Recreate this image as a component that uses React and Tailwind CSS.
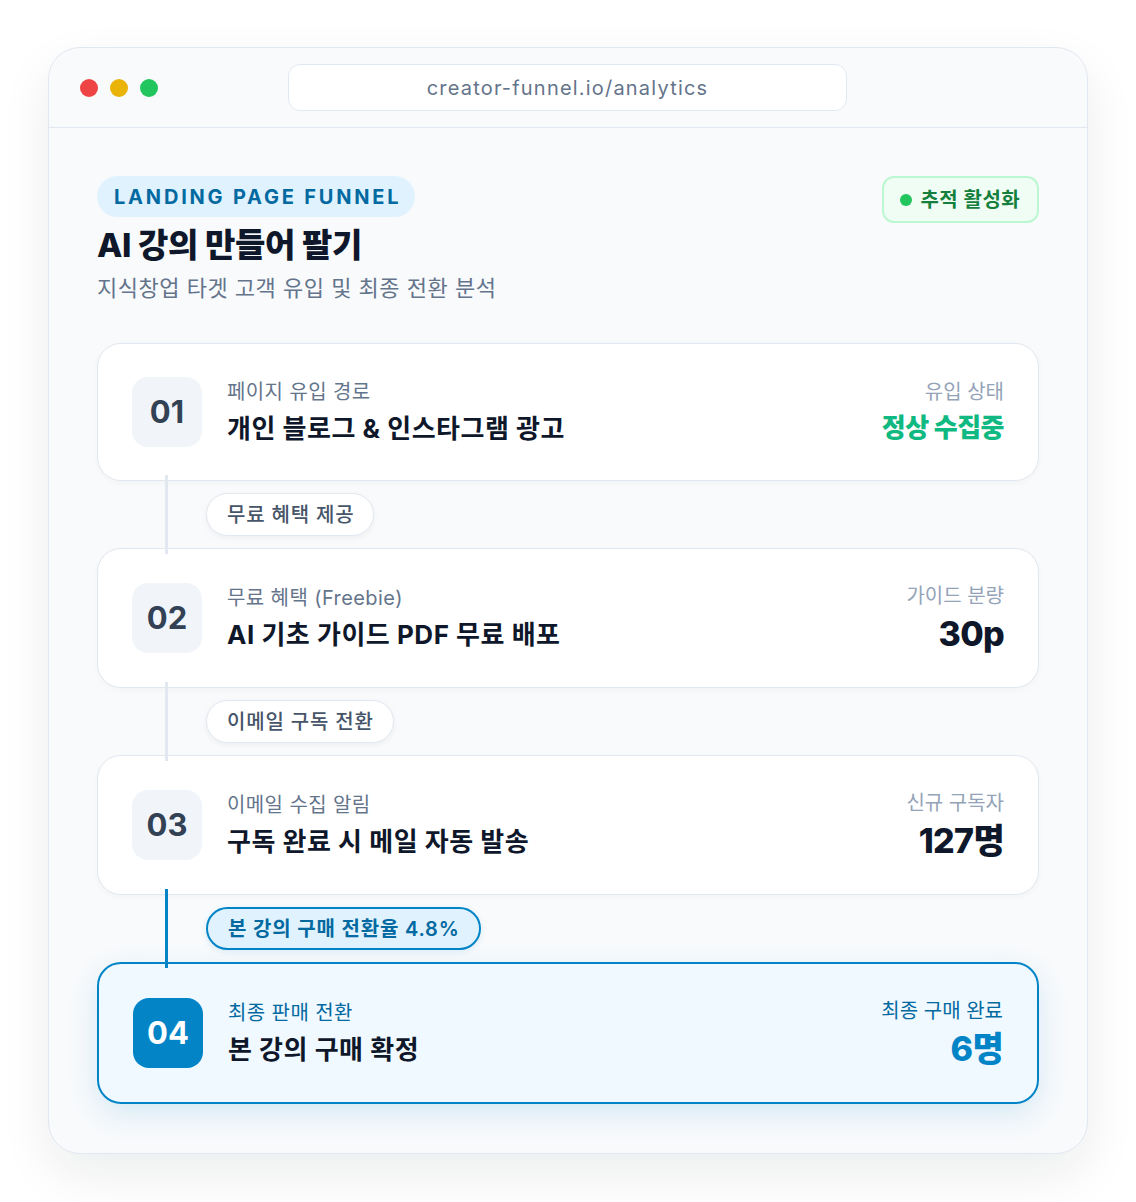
import React from 'react';

const FONT = { fontFamily: "Inter, 'Noto Sans CJK KR', sans-serif" };

function StepCard({ num, label, title, rightLabel, rightValue, valueClass, active }) {
  return (
    <div
      className={`relative flex items-center rounded-3xl px-[34px] py-[33px] ${
        active
          ? 'bg-[#f0f9ff] border-2 border-[#0284c7] shadow-[0_10px_30px_rgba(2,132,199,0.14)]'
          : 'bg-white border-[1.5px] border-[#e2e8f0] shadow-[0_2px_6px_rgba(15,23,42,0.03)]'
      }`}
    >
      <div
        className={`w-[70px] h-[70px] shrink-0 rounded-2xl flex items-center justify-center text-[31px] font-bold ${
          active ? 'bg-[#0284c7] text-white' : 'bg-[#f1f5f9] text-[#334155]'
        }`}
      >
        {num}
      </div>
      <div className="ml-[25px] flex flex-col">
        <div className={`text-[20px] leading-7 tracking-[0.02em] ${active ? 'text-[#0369a1]' : 'text-[#64748b]'}`}>{label}</div>
        <div className="mt-[5px] text-[26px] leading-9 font-bold text-[#0f172a] tracking-[0.02em]">{title}</div>
      </div>
      <div className="ml-auto flex flex-col items-end">
        <div className={`text-[20px] leading-7 ${active ? 'text-[#0369a1]' : 'text-[#94a3b8]'}`}>{rightLabel}</div>
        <div className={`mt-1 font-extrabold tracking-[-0.02em] ${valueClass}`}>{rightValue}</div>
      </div>
    </div>
  );
}

function Connector({ text, active }) {
  return (
    <div className="relative h-[67px] flex items-center">
      <div
        className={`absolute left-[68px] -top-[6px] -bottom-[6px] w-[3px] z-10 ${
          active ? 'bg-[#0284c7]' : 'bg-[#e2e8f0]'
        }`}
      />
      <div
        className={`ml-[109px] h-[43px] pl-[20px] pr-[19px] flex items-center rounded-full text-[20px] tracking-[0.04em] ${
          active
            ? 'bg-[#e0f2fe] border-2 border-[#0284c7] text-[#0369a1] font-semibold shadow-[0_2px_6px_rgba(2,132,199,0.12)]'
            : 'bg-white border-[1.5px] border-[#e2e8f0] text-[#475569] font-medium shadow-[0_2px_6px_rgba(15,23,42,0.05)]'
        }`}
      >
        {text}
      </div>
    </div>
  );
}

export default function App() {
  return (
    <div className="min-h-screen bg-white pt-[47px] px-[48px]" style={FONT}>
      <div className="w-[1040px] h-[1107px] rounded-[32px] bg-[#f8fafc] border-[1.5px] border-[#e2e8f0] shadow-[0_20px_50px_rgba(15,23,42,0.08)] overflow-hidden flex flex-col">
        {/* Title bar */}
        <div className="h-[80px] shrink-0 flex items-center px-[31px] border-b-[1.5px] border-[#e2e8f0]">
          <div className="flex gap-[12px]">
            <span className="w-[18px] h-[18px] rounded-full bg-[#ef4444]" />
            <span className="w-[18px] h-[18px] rounded-full bg-[#eab308]" />
            <span className="w-[18px] h-[18px] rounded-full bg-[#22c55e]" />
          </div>
          <div className="ml-[130px] w-[559px] h-[47px] rounded-xl bg-white border-[1.5px] border-[#e2e8f0] flex items-center justify-center text-[20px] tracking-[0.06em] text-[#64748b]">
            creator-funnel.io/analytics
          </div>
        </div>

        {/* Content */}
        <div className="px-[48px] pt-[48px] flex flex-col">
          <div className="flex justify-between items-start">
            <div className="flex flex-col items-start">
              <div className="h-[41px] pl-[17px] pr-[14px] flex items-center rounded-full bg-[#e0f2fe] text-[#0369a1] text-[20px] font-bold tracking-[2.8px]">
                LANDING PAGE FUNNEL
              </div>
              <div className="mt-[8px] text-[33px] leading-10 font-extrabold text-[#0f172a] tracking-[-0.01em]">
                AI 강의 만들어 팔기
              </div>
              <div className="mt-[8px] text-[22px] leading-[30px] text-[#64748b] tracking-[0.5px]">
                지식창업 타겟 고객 유입 및 최종 전환 분석
              </div>
            </div>
            <div className="h-[47px] pl-[16px] pr-[17px] flex items-center gap-[9px] rounded-xl bg-[#f0fdf4] border-2 border-[#bbf7d0] text-[20px] font-semibold tracking-[0.02em] text-[#15803d]">
              <span className="w-[12px] h-[12px] rounded-full bg-[#22c55e]" />
              추적 활성화
            </div>
          </div>

          <div className="mt-[40px] flex flex-col">
            <StepCard
              num="01"
              label="페이지 유입 경로"
              title="개인 블로그 & 인스타그램 광고"
              rightLabel="유입 상태"
              rightValue="정상 수집중"
              valueClass="text-[26px] leading-9 text-[#10b981]"
            />
            <Connector text="무료 혜택 제공" />
            <StepCard
              num="02"
              label="무료 혜택 (Freebie)"
              title="AI 기초 가이드 PDF 무료 배포"
              rightLabel="가이드 분량"
              rightValue="30p"
              valueClass="text-[34px] leading-10 text-[#0f172a]"
            />
            <Connector text="이메일 구독 전환" />
            <StepCard
              num="03"
              label="이메일 수집 알림"
              title="구독 완료 시 메일 자동 발송"
              rightLabel="신규 구독자"
              rightValue="127명"
              valueClass="text-[34px] leading-10 text-[#0f172a]"
            />
            <Connector text="본 강의 구매 전환율 4.8%" active />
            <StepCard
              num="04"
              label="최종 판매 전환"
              title="본 강의 구매 확정"
              rightLabel="최종 구매 완료"
              rightValue="6명"
              valueClass="text-[34px] leading-10 text-[#0284c7]"
              active
            />
          </div>
        </div>
      </div>
    </div>
  );
}
